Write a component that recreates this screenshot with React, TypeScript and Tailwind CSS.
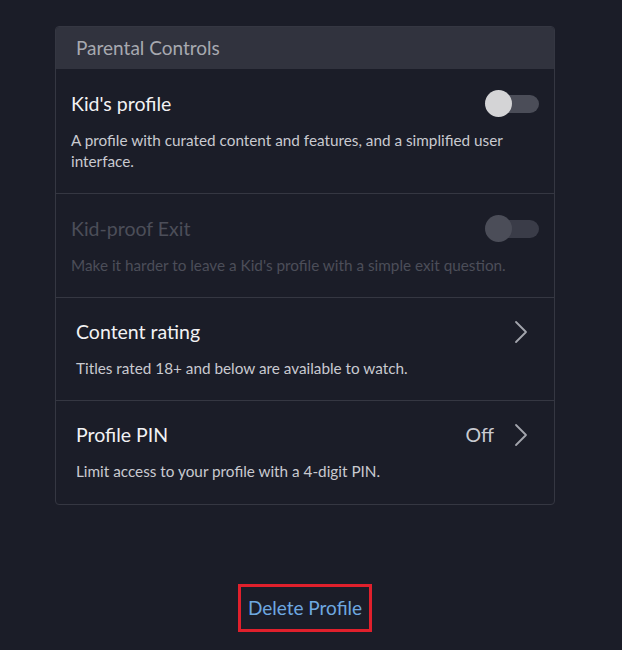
import React from "react";

function Toggle({ disabled }: { disabled?: boolean }) {
  return (
    <div className="relative w-[54px] h-[27px] flex items-center">
      <div className={`absolute left-[1px] right-0 h-[18px] rounded-full ${disabled ? "bg-[#3a3c48]" : "bg-[#4b4d58]"}`} />
      <div className={`absolute left-0 w-[27px] h-[27px] rounded-full ${disabled ? "bg-[#4b4d58]" : "bg-[#d4d4d6]"}`} />
    </div>
  );
}

function Chevron() {
  return (
    <svg width="14" height="24" viewBox="0 0 14 24" fill="none">
      <path d="M2 2 L12 12 L2 22" stroke="#a3a5ad" strokeWidth="1.8" strokeLinecap="round" strokeLinejoin="round" />
    </svg>
  );
}

export default function App() {
  return (
    <div className="min-h-[650px] w-full bg-[#1b1d28]" style={{ fontFamily: "Lato, 'Noto Sans', sans-serif" }}>
      <div className="ml-[55px] w-[500px] flex flex-col items-center pt-[26px]">
        <div className="w-[500px] rounded-[4px] border border-[#353742] overflow-hidden">
          <div className="h-[42px] bg-[#31333e] flex items-center pl-[20px] text-[19px] text-[#a7a9b0]">
            Parental Controls
          </div>
          <div className="pl-[15px] pr-[15px] pt-[21px] pb-[21px] border-b border-[#353742]">
            <div className="flex items-center justify-between h-[27px]">
              <div className="text-[19.5px] text-[#f2f2f4]">Kid's profile</div>
              <Toggle />
            </div>
            <div className="mt-[13px] text-[15.3px] leading-[21px] text-[#c9cad0] pr-[30px]">
              A profile with curated content and features, and a simplified user interface.
            </div>
          </div>
          <div className="pl-[15px] pr-[15px] pt-[21px] pb-[21px] border-b border-[#353742]">
            <div className="flex items-center justify-between h-[27px]">
              <div className="text-[19.5px] text-[#4c4e59]">Kid-proof Exit</div>
              <Toggle disabled />
            </div>
            <div className="mt-[13px] text-[15.3px] leading-[21px] text-[#4c4e59]">
              Make it harder to leave a Kid's profile with a simple exit question.
            </div>
          </div>
          <div className="pl-[20px] pr-[26px] pt-[20px] pb-[21px] border-b border-[#353742]">
            <div className="flex items-center justify-between h-[27px]">
              <div className="text-[19.5px] text-[#f2f2f4]">Content rating</div>
              <Chevron />
            </div>
            <div className="mt-[13px] text-[15.3px] leading-[21px] text-[#c9cad0]">
              Titles rated 18+ and below are available to watch.
            </div>
          </div>
          <div className="pl-[20px] pr-[26px] pt-[20px] pb-[22px]">
            <div className="flex items-center justify-between h-[27px]">
              <div className="text-[19.5px] text-[#f2f2f4]">Profile PIN</div>
              <div className="flex items-center gap-[20px]">
                <span className="text-[19.5px] text-[#c9cad0]">Off</span>
                <Chevron />
              </div>
            </div>
            <div className="mt-[13px] text-[15.3px] leading-[21px] text-[#c9cad0]">
              Limit access to your profile with a 4-digit PIN.
            </div>
          </div>
        </div>
        <div className="mt-[79px] w-[134px] h-[48px] border-[3px] border-[#e0202c] flex items-center justify-center">
          <span className="text-[19px] leading-[24px] text-[#6ea8e0]">Delete Profile</span>
        </div>
      </div>
    </div>
  );
}
